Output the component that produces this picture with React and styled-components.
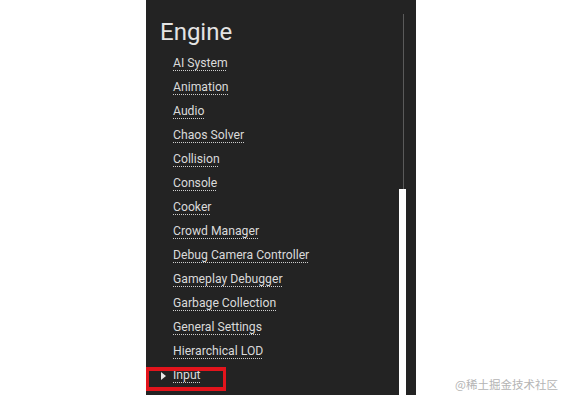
import React from 'react'
import styled, {createGlobalStyle} from 'styled-components'

const items = [
  'AI System',
  'Animation',
  'Audio',
  'Chaos Solver',
  'Collision',
  'Console',
  'Cooker',
  'Crowd Manager',
  'Debug Camera Controller',
  'Gameplay Debugger',
  'Garbage Collection',
  'General Settings',
  'Hierarchical LOD',
  'Input'
]

function App () {
  return (
    <Page>
      <GlobalStyle />
      <Gutter />
      <Panel>
        <Content>
          <Title>Engine</Title>
          <List>
            {items.map(item => (
              <Item key={item}>
                {item === 'Input' && (
                  <>
                    <Highlight />
                    <Arrow />
                  </>
                )}
                <Label>{item}</Label>
              </Item>
            ))}
          </List>
        </Content>
        <Scrollbar>
          <Track />
          <Thumb />
        </Scrollbar>
      </Panel>
      <Watermark>@稀土掘金技术社区</Watermark>
    </Page>
  )
}

export default App

const GlobalStyle = createGlobalStyle`
  body {
    margin: 0;
    background: #ffffff;
    font-family: Roboto, "Noto Sans", sans-serif;
  }
`

const Page = styled.div`
  position: relative;
  display: flex;
  width: 562px;
  height: 395px;
  overflow: hidden;
  background: #fff;
`
const Gutter = styled.div`
  width: 146px;
  flex: none;
`
const Panel = styled.div`
  width: 270px;
  height: 395px;
  flex: none;
  display: flex;
  background: #232323;
`
const Content = styled.div`
  flex: 1;
  display: flex;
  flex-direction: column;
`
const Title = styled.h1`
  margin: 17px 0 0 14px;
  font-size: 24px;
  line-height: 30px;
  font-weight: 400;
  color: #e4e4e4;
`
const List = styled.ul`
  list-style: none;
  margin: 4px 0 0;
  padding: 0;
`
const Item = styled.li`
  position: relative;
  display: flex;
  align-items: center;
  height: 24px;
  padding-left: 27px;
`
const Label = styled.span`
  font-size: 12.2px;
  line-height: 16px;
  color: #dadada;
  text-decoration: underline dotted #cfcfcf;
  text-underline-offset: 3px;
  text-decoration-thickness: 1px;
`
const Arrow = styled.span`
  position: absolute;
  left: 15px;
  top: 9px;
  width: 0;
  height: 0;
  border-top: 4px solid transparent;
  border-bottom: 4px solid transparent;
  border-left: 5px solid #e8e8e8;
`
const Highlight = styled.span`
  position: absolute;
  left: 0;
  top: 4px;
  width: 80px;
  height: 24px;
  box-sizing: border-box;
  border-style: solid;
  border-color: #e3141c;
  border-width: 4px 3px;
`
const Scrollbar = styled.div`
  position: relative;
  width: 7px;
  margin-right: 10px;
  flex: none;
`
const Track = styled.div`
  position: absolute;
  left: 4px;
  top: 14px;
  width: 1px;
  height: 176px;
  background: #5a5a5a;
`
const Thumb = styled.div`
  position: absolute;
  left: 0;
  top: 189px;
  width: 7px;
  bottom: 0;
  background: #ffffff;
`
const Watermark = styled.div`
  position: absolute;
  right: 4px;
  bottom: 3px;
  font-family: "Noto Sans CJK SC", sans-serif;
  font-size: 11.5px;
  color: #b4b4b4;
`
